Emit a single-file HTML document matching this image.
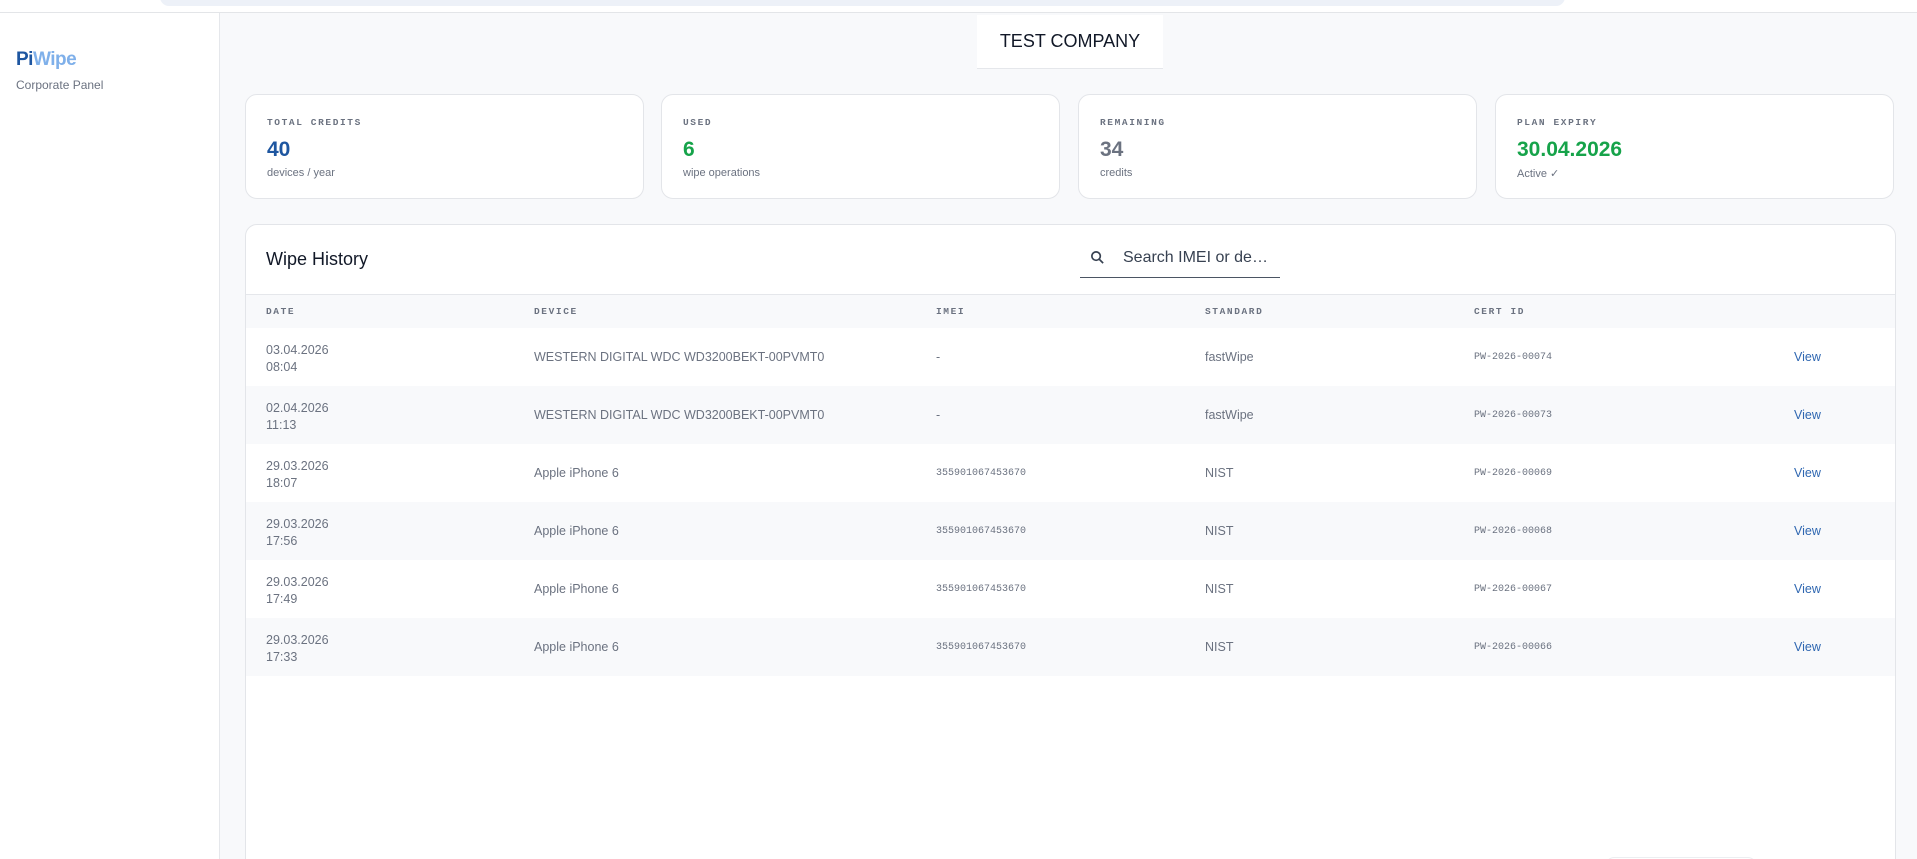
<!DOCTYPE html>
<html style="width:1917px;height:859px;overflow:hidden"><head><meta charset="utf-8"><style>
*{box-sizing:border-box;margin:0;padding:0}
body{width:1917px;height:859px;overflow:hidden;background:#f8f9fb;font-family:"Liberation Sans",sans-serif;position:relative;color:#374151}
.top{position:absolute;left:0;top:0;width:1917px;height:13px;background:#fff;border-bottom:1px solid #e3e5e8;overflow:hidden}
.pill{position:absolute;left:160px;top:-12px;width:1405px;height:18px;background:#edf1f8;border-radius:10px}
.side{position:absolute;left:0;top:13px;width:220px;height:846px;background:#fff;border-right:1px solid #e5e7eb}
.logo{position:absolute;left:16px;top:36px;font-size:19px;font-weight:bold;letter-spacing:-0.5px}
.sub{position:absolute;left:16px;top:65px;font-size:12px;color:#6b7280}
.co{position:absolute;left:977px;top:15px;width:186px;height:54px;background:#fff;border-bottom:1px solid #e5e7eb;text-align:center;line-height:52px;font-size:18px;color:#111827}
.card{position:absolute;top:94px;width:399px;height:105px;background:#fff;border:1px solid #e3e5e9;border-radius:12px}
.lab{position:absolute;left:21px;top:22px;font-family:"Liberation Mono",monospace;font-size:9.5px;letter-spacing:1.6px;color:#6b7280;font-weight:bold}
.val{position:absolute;left:21px;top:43px;font-size:21px;font-weight:bold}
.sm{position:absolute;left:21px;top:72px;font-size:11px;color:#6b7280}
.tbl{position:absolute;left:245px;top:224px;width:1651px;height:635px;background:#fff;border:1px solid #e3e5e9;border-bottom:none;border-radius:12px 12px 0 0;overflow:hidden}
.th{position:absolute;left:20px;top:24px;font-size:18px;color:#111827}
.srch{position:absolute;left:834px;top:12px;width:200px;height:41px;border-bottom:1.5px solid #4b5563}
.srch span{position:absolute;left:43px;top:12px;font-size:16px;color:#374151}
.hr{position:absolute;left:0;top:69px;width:100%;height:34px;background:#f8f9fb;border-top:1px solid #e5e7eb}
.hr div{position:absolute;top:11px;font-family:"Liberation Mono",monospace;font-size:9.5px;letter-spacing:1.6px;color:#6b7280;font-weight:bold}
.r{position:absolute;left:0;width:100%;height:58px;font-size:12.5px;color:#6b7280}
.r.a{background:#f8f9fb}
.r div{position:absolute;top:22px}
.r .d{top:14px;line-height:17px}
.r .m{font-family:"Liberation Mono",monospace;font-size:10px;top:24px}
.r .v{color:#2f67b1}
</style></head><body>
<div class="top"><div class="pill"></div></div>
<div class="side"><div class="logo"><span style="color:#1e56a0">Pi</span><span style="color:#7fb0ea">Wipe</span></div><div class="sub">Corporate Panel</div></div>
<div class="co">TEST COMPANY</div>
<div class="card" style="left:245px"><div class="lab">TOTAL CREDITS</div><div class="val" style="color:#1e56a0">40</div><div class="sm">devices / year</div></div>
<div class="card" style="left:661px"><div class="lab">USED</div><div class="val" style="color:#16a34a">6</div><div class="sm">wipe operations</div></div>
<div class="card" style="left:1078px"><div class="lab">REMAINING</div><div class="val" style="color:#6b7280">34</div><div class="sm">credits</div></div>
<div class="card" style="left:1495px"><div class="lab">PLAN EXPIRY</div><div class="val" style="color:#16a34a">30.04.2026</div><div class="sm">Active ✓</div></div>
<div class="tbl">
<div class="th">Wipe History</div>
<div class="srch"><svg style="position:absolute;left:10px;top:13px" width="15" height="15" viewBox="0 0 16 16"><circle cx="6.5" cy="6.5" r="4.5" fill="none" stroke="#374151" stroke-width="1.8"/><path d="M10 10l4 4" stroke="#374151" stroke-width="1.8"/></svg><span>Search IMEI or de…</span></div>
<div class="hr"><div style="left:20px">DATE</div><div style="left:288px">DEVICE</div><div style="left:690px">IMEI</div><div style="left:959px">STANDARD</div><div style="left:1228px">CERT ID</div></div>
<div class="r" style="top:103px"><div class="d" style="left:20px">03.04.2026<br>08:04</div><div style="left:288px">WESTERN DIGITAL WDC WD3200BEKT-00PVMT0</div><div style="left:690px">-</div><div style="left:959px">fastWipe</div><div class="m" style="left:1228px">PW-2026-00074</div><div class="v" style="left:1548px">View</div></div>
<div class="r a" style="top:161px"><div class="d" style="left:20px">02.04.2026<br>11:13</div><div style="left:288px">WESTERN DIGITAL WDC WD3200BEKT-00PVMT0</div><div style="left:690px">-</div><div style="left:959px">fastWipe</div><div class="m" style="left:1228px">PW-2026-00073</div><div class="v" style="left:1548px">View</div></div>
<div class="r" style="top:219px"><div class="d" style="left:20px">29.03.2026<br>18:07</div><div style="left:288px">Apple iPhone 6</div><div class="m" style="left:690px">355901067453670</div><div style="left:959px">NIST</div><div class="m" style="left:1228px">PW-2026-00069</div><div class="v" style="left:1548px">View</div></div>
<div class="r a" style="top:277px"><div class="d" style="left:20px">29.03.2026<br>17:56</div><div style="left:288px">Apple iPhone 6</div><div class="m" style="left:690px">355901067453670</div><div style="left:959px">NIST</div><div class="m" style="left:1228px">PW-2026-00068</div><div class="v" style="left:1548px">View</div></div>
<div class="r" style="top:335px"><div class="d" style="left:20px">29.03.2026<br>17:49</div><div style="left:288px">Apple iPhone 6</div><div class="m" style="left:690px">355901067453670</div><div style="left:959px">NIST</div><div class="m" style="left:1228px">PW-2026-00067</div><div class="v" style="left:1548px">View</div></div>
<div class="r a" style="top:393px"><div class="d" style="left:20px">29.03.2026<br>17:33</div><div style="left:288px">Apple iPhone 6</div><div class="m" style="left:690px">355901067453670</div><div style="left:959px">NIST</div><div class="m" style="left:1228px">PW-2026-00066</div><div class="v" style="left:1548px">View</div></div>
<div style="position:absolute;left:1360px;top:632px;width:150px;height:20px;border:1px solid #eceef1;border-radius:8px"></div>
</div>
</body></html>
